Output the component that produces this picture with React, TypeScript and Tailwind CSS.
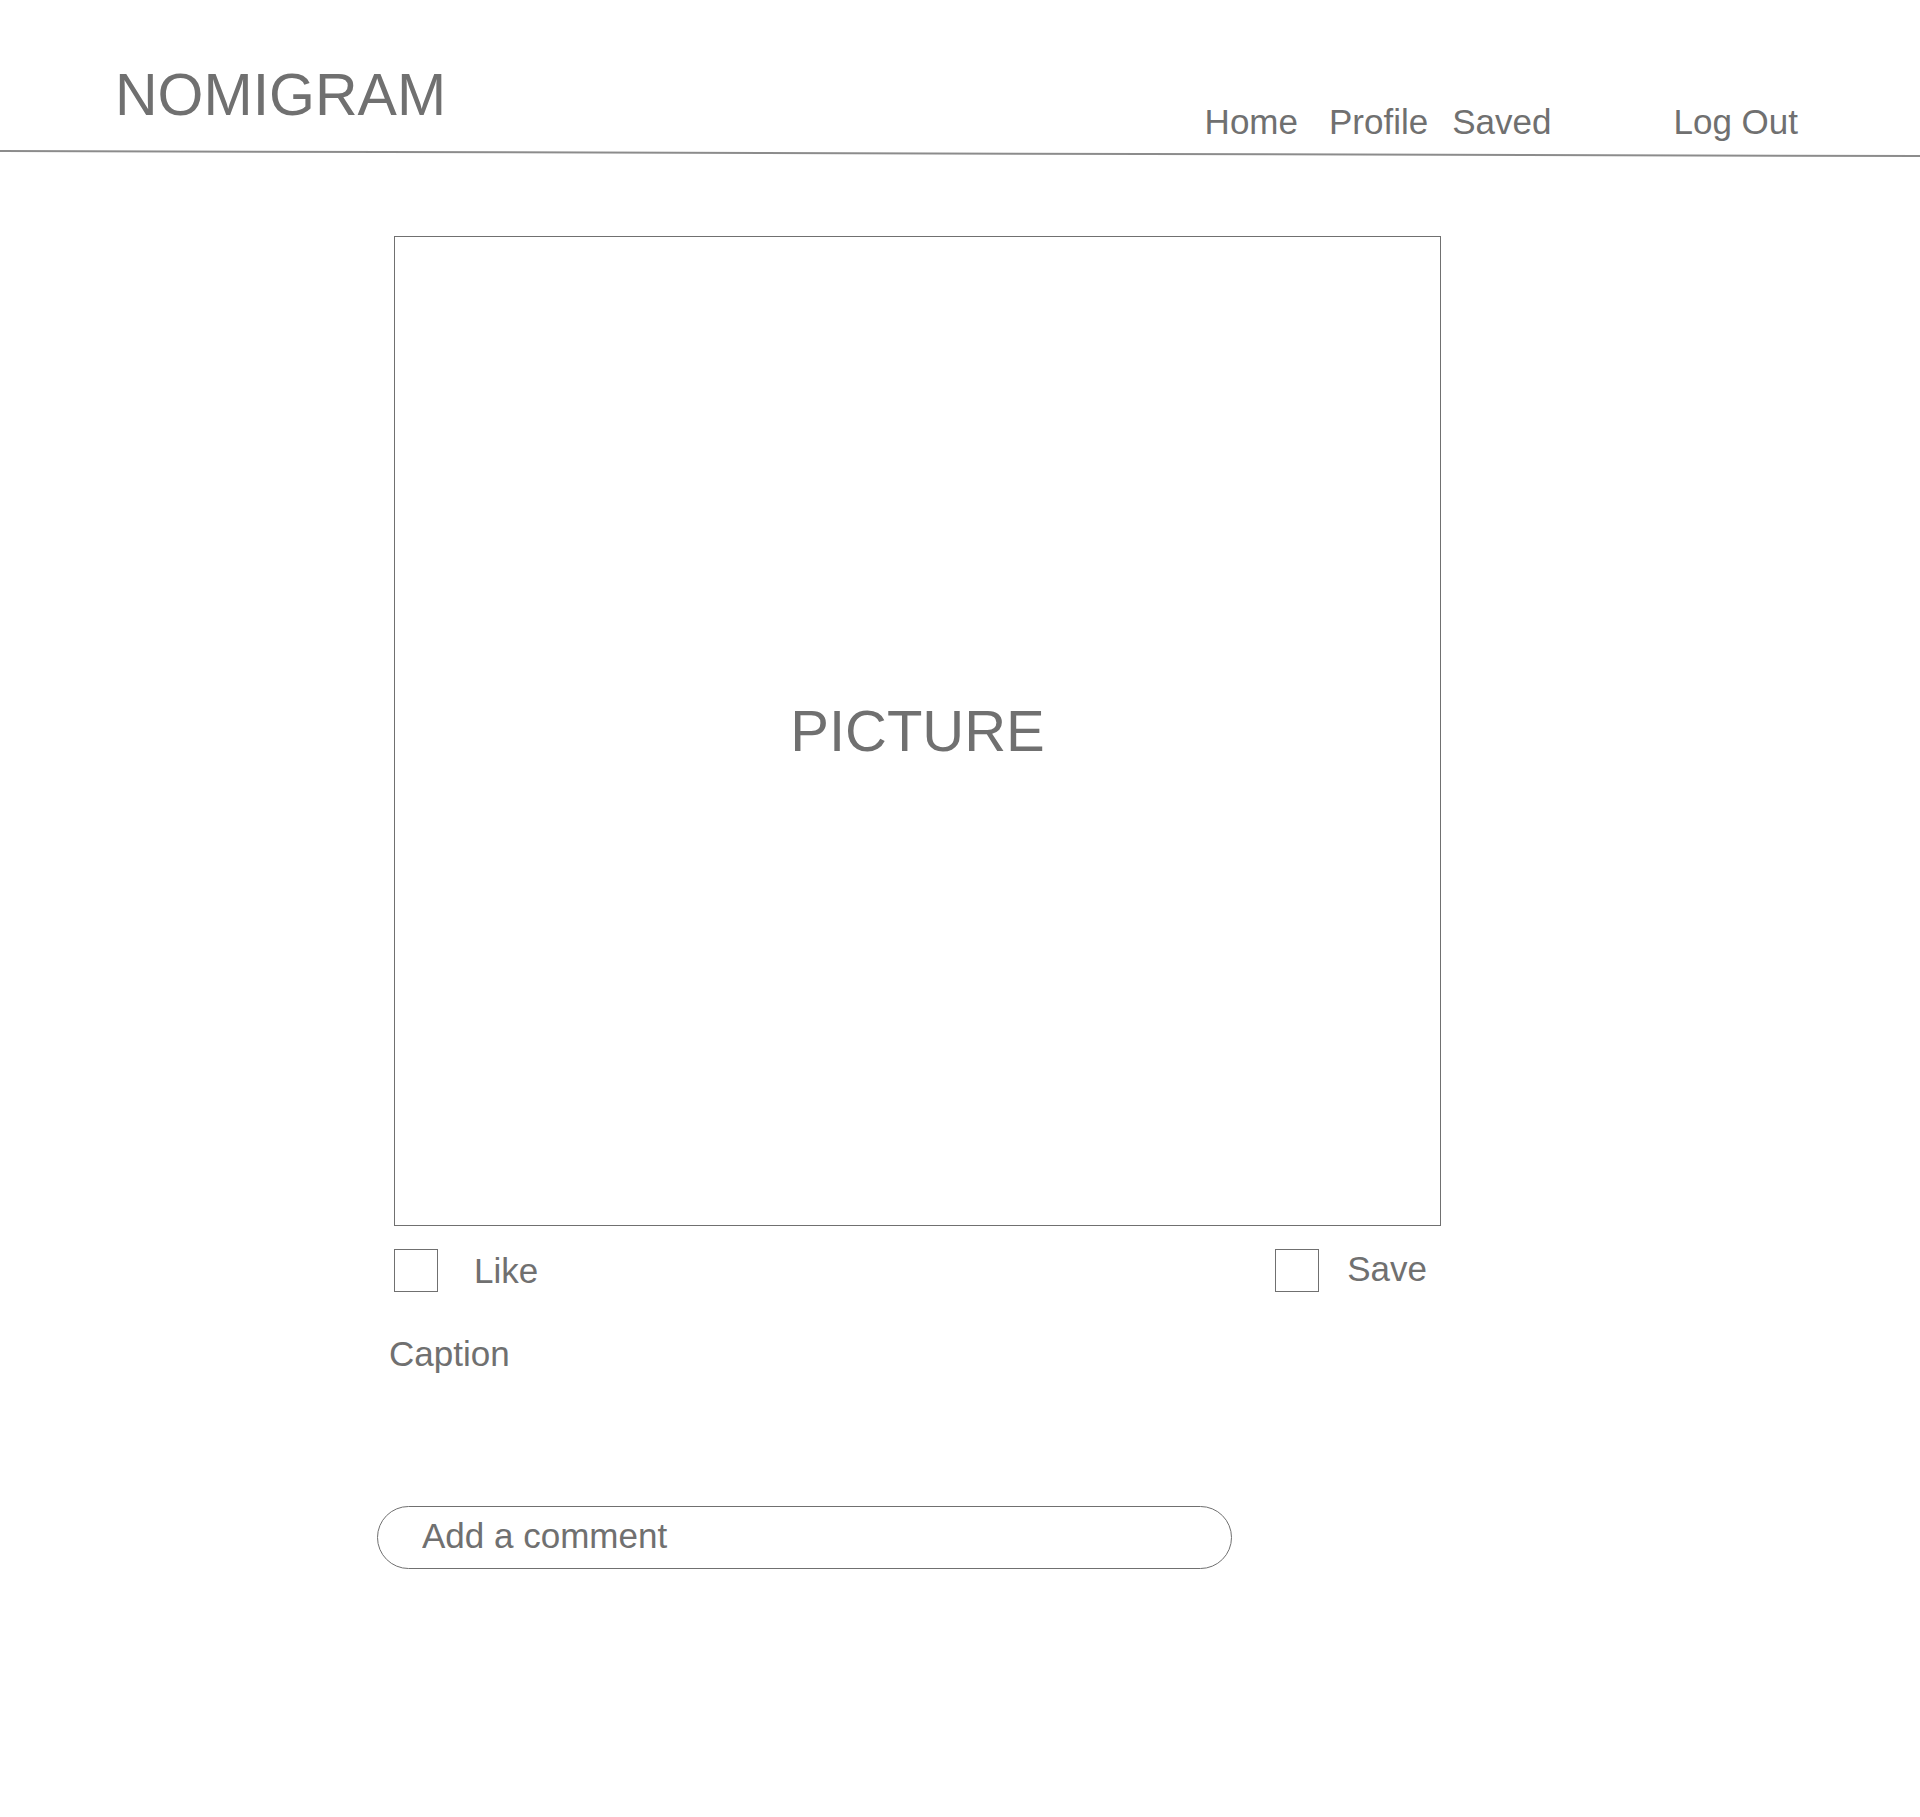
import React from 'react'

const navLinks = [
  { label: 'Home', gap: 'ml-0' },
  { label: 'Profile', gap: 'ml-[31px]' },
  { label: 'Saved', gap: 'ml-[24px]' },
  { label: 'Log Out', gap: 'ml-[122px]' },
]

const Checkbox = () => (
  <span className="block w-[44px] h-[43px] border border-[#707070] bg-white" />
)

export default function App() {
  return (
    <div
      className="min-h-[1817px] w-full bg-white text-[#707070]"
      style={{ fontFamily: '"Liberation Sans", Arial, Helvetica, sans-serif' }}
    >
      {/* top bar */}
      <header className="flex items-start h-[150px]">
        <div className="ml-[115px] mt-[66px] text-[59px] leading-none">NOMIGRAM</div>
        <nav className="ml-auto mr-[122px] mt-[104px] flex text-[35px] leading-none">
          {navLinks.map((link) => (
            <a key={link.label} href="#" className={link.gap}>
              {link.label}
            </a>
          ))}
        </nav>
      </header>
      <div className="h-[2px] bg-[#8c8c8c] origin-left rotate-[0.15deg]" />

      {/* post */}
      <main className="ml-[394px] pt-[84px] w-[1047px]">
        <div className="h-[990px] border border-[#707070] flex items-center justify-center">
          <span className="text-[58px] leading-none">PICTURE</span>
        </div>

        <div className="mt-[23px] flex items-center justify-between pr-[14px]">
          <label className="flex items-center gap-[36px]">
            <Checkbox />
            <span className="text-[35px] leading-none">Like</span>
          </label>
          <label className="flex items-center gap-[28px]">
            <Checkbox />
            <span className="text-[35px] leading-none mb-[4px]">Save</span>
          </label>
        </div>

        <p className="mt-[44px] -ml-[5px] text-[35px] leading-none">Caption</p>

        <div className="mt-[135px] -ml-[17px] w-[855px] h-[63px] rounded-full border border-[#707070] flex items-center pl-[44px] pb-[3px]">
          <input
            type="text"
            placeholder="Add a comment"
            className="w-full bg-transparent text-[35px] leading-none outline-none placeholder:text-[#707070]"
          />
        </div>
      </main>
    </div>
  )
}
